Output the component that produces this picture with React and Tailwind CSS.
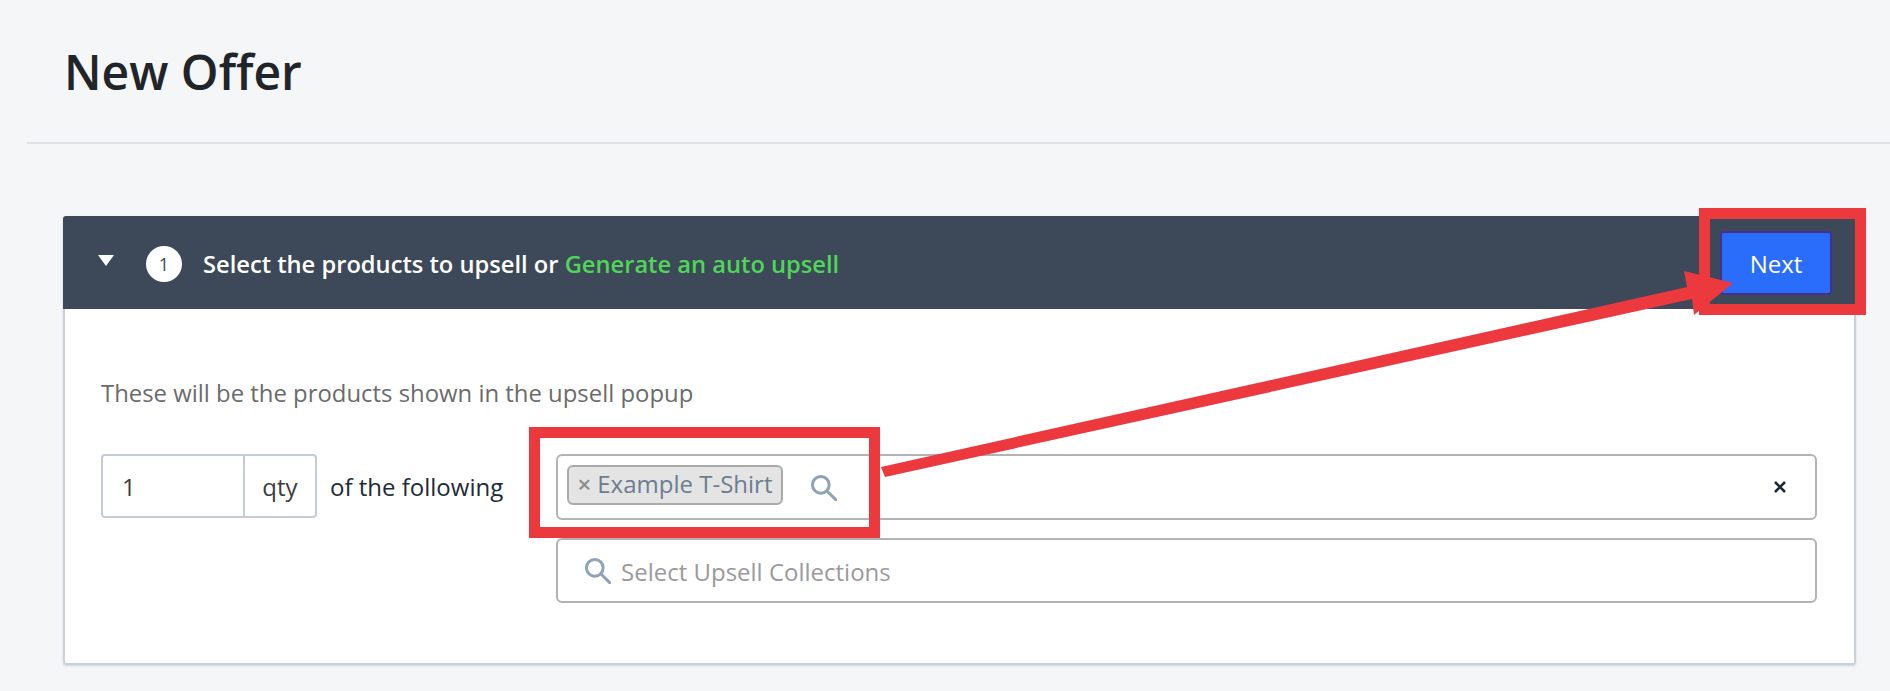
function Search({ className }) {
  return (
    <svg viewBox="0 0 20 20" className={className} fill="none" stroke="#8fa3b8" strokeWidth="2.2" strokeLinecap="round">
      <circle cx="8" cy="8" r="6.2" />
      <path d="M12.6 12.6 L19 19" />
    </svg>
  );
}
export default function App() {
  return (
    <div className="relative h-[691px] w-full overflow-hidden bg-[#f4f6f8] font-['Open_Sans','Noto_Sans',sans-serif] text-[#212b36]">
      <div className="ml-[27px] flex h-[144px] items-center border-b-2 border-[#dfe3e8] pl-[37px]">
        <h1 className="mt-[1px] text-[48px] font-semibold leading-none text-[#212428]">New Offer</h1>
      </div>
      <div className="ml-[63px] mt-[72px] w-[1793px] rounded-[3px] bg-white shadow-[0_1px_2px_0_rgba(100,120,140,0.25)]">
        <div className="flex h-[93px] items-center rounded-t-[3px] bg-[#3d4858] pl-[35px] pr-[24px]">
          <svg viewBox="0 0 16 11" className="mt-[-4px] h-[11px] w-[16px]"><path d="M0 0 H16 L8 11 Z" fill="#fff" /></svg>
          <span className="ml-[32px] mt-[3px] flex h-[36px] w-[36px] items-center justify-center rounded-full bg-white text-[18px] text-[#3d4858]">1</span>
          <span className="ml-[21px] mt-[4px] text-[23.7px] font-semibold text-white">Select the products to upsell or <span className="text-[#50d558]">Generate an auto upsell</span></span>
          <button className="ml-auto h-[64px] w-[112px] rounded-[4px] border-2 border-[#43308f] bg-[#2a6dfa] pt-[3px] text-[24px] text-white">Next</button>
        </div>
        <div className="rounded-b-[3px] border-x-2 border-b-2 border-[#c9d0d7] pb-[60px] pl-[36px] pr-[37px] pt-[67px]">
          <p className="text-[23.9px] leading-[34px] text-[#6b6b6b]">These will be the products shown in the upsell popup</p>
          <div className="mt-[44px] flex items-start">
            <div className="flex h-[64px] w-[216px] rounded-[4px] border-2 border-[#c4cdd5] text-[24px] text-[#3c3c3c]">
              <div className="flex w-[140px] items-center pl-[19px] pt-[1px]">1</div>
              <div className="flex flex-1 items-center justify-center border-l-2 border-[#c4cdd5] pt-[2px]">qty</div>
            </div>
            <span className="ml-[13px] mt-[15px] text-[24px] text-[#212b36]">of the following</span>
            <div className="ml-auto flex w-[1261px] flex-col gap-[18px]">
              <div className="flex h-[66px] items-start rounded-[6px] border-2 border-[#b3b3b3] pl-[9px] pr-[29px] pt-[9px]">
                <span className="flex h-[40px] w-[216px] items-center justify-center rounded-[6px] border-2 border-[#a9a9a9] bg-[#e4e4e4] pb-[2px] text-[24px] text-[#6c7d90]"><span className="mr-[6px] font-semibold text-[#8d8d8d]">×</span>Example T-Shirt</span>
                <Search className="ml-[27px] mt-[9px] h-[27px] w-[27px]" />
                <svg viewBox="0 0 12 12" className="ml-auto mt-[16px] h-[12px] w-[12px]"><path d="M1 1 L11 11 M11 1 L1 11" stroke="#1d2939" strokeWidth="2.6" /></svg>
              </div>
              <div className="flex h-[65px] items-center rounded-[6px] border-2 border-[#b3b3b3] pl-[26px]">
                <Search className="h-[27px] w-[27px]" />
                <span className="ml-[10px] mt-[2px] text-[24px] text-[#9a9a9a]">Select Upsell Collections</span>
              </div>
            </div>
          </div>
        </div>
      </div>
      <div className="pointer-events-none absolute left-[1699px] top-[208px] h-[107px] w-[167px] border-[11px] border-[#ec393e]" />
      <div className="pointer-events-none absolute left-[529px] top-[427px] h-[111px] w-[351px] border-[11px] border-[#ec393e]" />
      <svg className="pointer-events-none absolute left-0 top-0" width="1890" height="691">
        <path d="M881 467 L1687 287 L1684 271 L1733 283 L1694 315 L1692 299 L885 477 Z" fill="#ec393e" />
      </svg>
    </div>
  );
}
